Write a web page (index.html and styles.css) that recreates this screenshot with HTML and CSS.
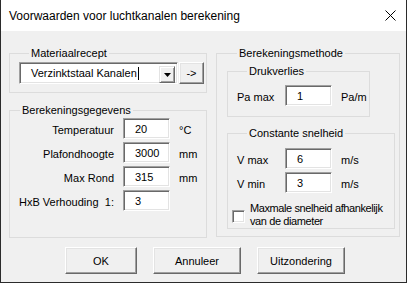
FILE: index.html
```html
<!DOCTYPE html>
<html lang="nl">
<head>
    <meta charset="UTF-8">
    <title>Voorwaarden voor luchtkanalen berekening</title>
    <link rel="stylesheet" href="styles.css">
</head>
<body>
    <div class="window">
        <div class="titlebar">
            <span class="title">Voorwaarden voor luchtkanalen berekening</span>
            <svg class="close" width="11" height="11" viewBox="0 0 11 11">
                <path d="M0.5 0.5 L10.5 10.5 M10.5 0.5 L0.5 10.5" stroke="#000" stroke-width="1" fill="none"/>
            </svg>
        </div>

        <div class="panels">
            <div class="col-left">
                <fieldset class="group group-recept">
                    <legend>Materiaalrecept</legend>
                    <div class="recept-row">
                        <div class="combo">
                            <span class="combo-text">Verzinktstaal Kanalen<span class="caret"></span></span>
                            <span class="combo-btn">
                                <svg width="7" height="4" viewBox="0 0 7 4"><path d="M0 0 H7 L3.5 4 Z" fill="#000"/></svg>
                            </span>
                        </div>
                        <button class="btn btn-small">-&gt;</button>
                    </div>
                </fieldset>

                <fieldset class="group group-gegevens">
                    <legend>Berekeningsgegevens</legend>
                    <div class="form-grid">
                        <label>Temperatuur</label>
                        <div class="field">20</div>
                        <span class="unit">°C</span>

                        <label>Plafondhoogte</label>
                        <div class="field">3000</div>
                        <span class="unit">mm</span>

                        <label>Max Rond</label>
                        <div class="field">315</div>
                        <span class="unit">mm</span>

                        <label class="split"><span>HxB Verhouding</span><span>1:</span></label>
                        <div class="field">3</div>
                        <span class="unit"></span>
                    </div>
                </fieldset>
            </div>

            <fieldset class="group group-methode">
                <legend>Berekeningsmethode</legend>

                <fieldset class="group group-druk">
                    <legend>Drukverlies</legend>
                    <div class="small-grid">
                        <label>Pa max</label>
                        <div class="field">1</div>
                        <span class="unit">Pa/m</span>
                    </div>
                </fieldset>

                <fieldset class="group group-snelheid">
                    <legend>Constante snelheid</legend>
                    <div class="small-grid">
                        <label>V max</label>
                        <div class="field">6</div>
                        <span class="unit">m/s</span>

                        <label>V min</label>
                        <div class="field">3</div>
                        <span class="unit">m/s</span>
                    </div>
                    <div class="check-row">
                        <span class="checkbox"></span>
                        <span class="check-label">Maxmale snelheid afhankelijk<br>van de diameter</span>
                    </div>
                </fieldset>
            </fieldset>
        </div>

        <div class="buttons">
            <button class="btn btn-ok">OK</button>
            <button class="btn btn-wide">Annuleer</button>
            <button class="btn btn-wide">Uitzondering</button>
        </div>
    </div>
</body>
</html>
```

FILE: styles.css
```css
body {
    margin: 0;
    background: #f0f0f0;
}
.window {
    width: 407px;
    height: 283px;
    box-sizing: border-box;
    border: 1px solid #2b2b2b;
    border-top: none;
    background: #f0f0f0;
    font-family: "Liberation Sans", Arial, sans-serif;
    font-size: 11px;
    color: #000;
    display: flex;
    flex-direction: column;
}
.titlebar {
    height: 31px;
    flex: none;
    background: #fff;
    display: flex;
    align-items: center;
    justify-content: space-between;
    padding: 0 10px 0 8px;
}
.title {
    font-size: 12px;
    margin-top: 1px;
}

.panels {
    display: flex;
    gap: 9px;
    padding: 15px 0 0 8px;
}
.col-left {
    width: 198px;
    display: flex;
    flex-direction: column;
    gap: 10px;
}

/* group boxes */
.group {
    margin: 0;
    padding: 0;
    min-width: 0;
    border: 1px solid #dcdcdc;
    box-sizing: border-box;
}
.group legend {
    margin-left: 10px;
    padding: 0 2px;
    line-height: 14px;
}
.group-recept {
    height: 47px;
    padding: 2px 0 0 9px;
}
.group-gegevens {
    height: 135px;
    padding: 0;
}
.group-methode {
    width: 184px;
    height: 191px;
    padding: 4px 0 0 10px;
}
.group-druk {
    width: 143px;
    height: 53px;
    padding: 7px 0 0 9px;
}
.group-snelheid {
    width: 168px;
    height: 103px;
    margin-top: 9px;
    padding: 8px 0 0 9px;
}

/* combo box */
.recept-row {
    display: flex;
    gap: 1px;
}
.combo {
    width: 159px;
    height: 22px;
    box-sizing: border-box;
    background: #fff;
    border: 1px solid;
    border-color: #a0a0a0 #fff #fff #a0a0a0;
    box-shadow: inset 1px 1px 0 #696969, inset -1px -1px 0 #e3e3e3;
    display: flex;
    align-items: center;
    justify-content: space-between;
    padding: 2px 2px 2px 11px;
}
.combo-text {
    display: flex;
    align-items: center;
}
.caret {
    display: inline-block;
    width: 1px;
    height: 13px;
    background: #000;
    margin-left: 1px;
}
.combo-btn {
    width: 16px;
    height: 17px;
    box-sizing: border-box;
    background: #f0f0f0;
    border: 1px solid;
    border-color: #e3e3e3 #696969 #696969 #e3e3e3;
    box-shadow: inset 1px 1px 0 #fff, inset -1px -1px 0 #a0a0a0;
    display: flex;
    align-items: center;
    justify-content: center;
    margin-top: 3px;
}

/* buttons */
.btn {
    font-family: inherit;
    font-size: 11px;
    color: #000;
    background: #f0f0f0;
    border: 1px solid;
    border-color: #fff #696969 #696969 #fff;
    box-shadow: inset -1px -1px 0 #a0a0a0, inset 1px 1px 0 #e3e3e3;
    padding: 0;
    box-sizing: border-box;
}
.btn-small {
    width: 25px;
    height: 22px;
}
.buttons {
    display: flex;
    gap: 16px;
    padding: 9px 0 0 64px;
}
.btn-ok {
    width: 72px;
    height: 27px;
}
.btn-wide {
    width: 88px;
    height: 27px;
}

/* fields */
.form-grid {
    display: grid;
    grid-template-columns: 104px 47px auto;
    column-gap: 9px;
    row-gap: 3px;
    align-items: center;
    margin-top: 1px;
}
.form-grid label {
    text-align: right;
    padding-top: 3px;
}
.form-grid .split {
    display: flex;
    justify-content: space-between;
    padding-left: 9px;
}
.field {
    height: 21px;
    box-sizing: border-box;
    background: #fff;
    border: 1px solid;
    border-color: #a0a0a0 #fff #fff #a0a0a0;
    box-shadow: inset 1px 1px 0 #696969, inset -1px -1px 0 #e3e3e3;
    padding: 3px 0 0 11px;
    line-height: 14px;
}
.unit {
    padding-top: 2px;
}
.small-grid {
    display: grid;
    grid-template-columns: 39px 47px auto;
    column-gap: 9px;
    row-gap: 3px;
    align-items: center;
}
.small-grid label {
    padding-top: 2px;
}

/* checkbox */
.check-row {
    display: flex;
    align-items: center;
    gap: 5px;
    margin: 9px 0 0 -5px;
}
.checkbox {
    width: 13px;
    height: 13px;
    box-sizing: border-box;
    background: #fff;
    border: 1px solid;
    border-color: #a0a0a0 #fff #fff #a0a0a0;
    box-shadow: inset 1px 1px 0 #696969, inset -1px -1px 0 #e3e3e3;
    margin-top: 2px;
}
.check-label {
    line-height: 13px;
    letter-spacing: -0.4px;
}
```
